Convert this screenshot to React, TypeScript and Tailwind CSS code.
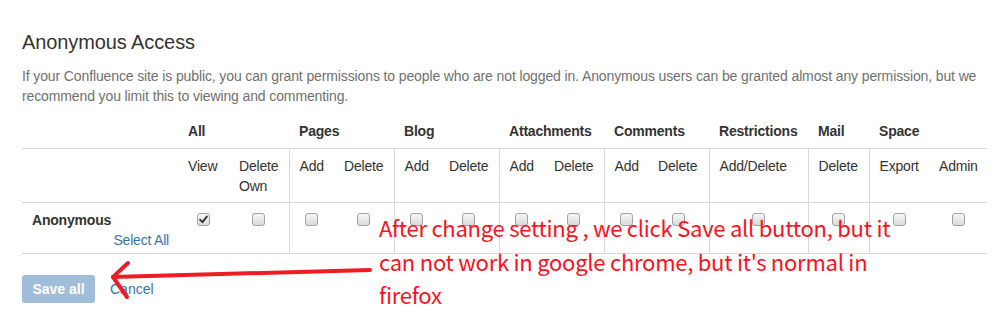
import React from "react"

const COLS = [156, 51, 60, 45, 60, 45, 60, 45, 60, 44, 61, 99, 61, 60, 58]

const GROUPS = [
    { label: "All", span: 2 },
    { label: "Pages", span: 2 },
    { label: "Blog", span: 2 },
    { label: "Attachments", span: 2 },
    { label: "Comments", span: 2 },
    { label: "Restrictions", span: 1 },
    { label: "Mail", span: 1 },
    { label: "Space", span: 2 },
]

// sub columns; sep = vertical line on the left
const SUBS = [
    { label: ["View"], sep: false, checked: true },
    { label: ["Delete", "Own"], sep: false },
    { label: ["Add"], sep: true },
    { label: ["Delete"], sep: false },
    { label: ["Add"], sep: true },
    { label: ["Delete"], sep: false },
    { label: ["Add"], sep: true },
    { label: ["Delete"], sep: false },
    { label: ["Add"], sep: true },
    { label: ["Delete"], sep: false },
    { label: ["Add/Delete"], sep: true },
    { label: ["Delete"], sep: true },
    { label: ["Export"], sep: true },
    { label: ["Admin"], sep: false },
]

const Checkbox = ({ checked }: { checked?: boolean }) => (
    <span className="inline-flex w-[13px] h-[13px] items-center justify-center rounded-[3px] border border-[#a3a3a3] bg-linear-to-b from-[#f7f7f7] to-[#dadada] align-top">
        {checked && (
            <svg width="9" height="9" viewBox="0 0 9 9">
                <path d="M1.2 4.8 L3.5 7.2 L7.8 1.6" fill="none" stroke="#333" strokeWidth="1.9" strokeLinecap="round" strokeLinejoin="round" />
            </svg>
        )}
    </span>
)

export default function App() {
    return (
        <div className="relative w-[999px] h-[321px] bg-white overflow-hidden pl-[22px] pt-[30px] font-['Liberation_Sans',Arial,sans-serif] text-[14px] text-[#333]">
            <h2 className="text-[20px] leading-[24px] tracking-[-0.1px] text-[#333]">Anonymous Access</h2>
            <p className="mt-[12px] w-[965px] leading-[20px] tracking-[-0.12px] text-[#707070]">
                If your Confluence site is public, you can grant permissions to people who are not logged in. Anonymous users can be granted almost any permission, but we recommend you limit this to viewing and commenting.
            </p>

            <table className="mt-[5px] w-[965px] table-fixed border-collapse leading-[20px] tracking-[-0.2px]">
                <colgroup>
                    {COLS.map((w, i) => <col key={i} style={{ width: w }} />)}
                </colgroup>
                <tbody>
                    <tr className="border-b border-[#d9d9d9]">
                        <th className="pt-[10px] pb-[7px]" />
                        {GROUPS.map((g) => (
                            <th key={g.label} colSpan={g.span} className="pt-[10px] pb-[7px] px-[10px] text-left font-bold whitespace-nowrap">{g.label}</th>
                        ))}
                    </tr>
                    <tr className="border-b border-[#d9d9d9]">
                        <td />
                        {SUBS.map((s, i) => (
                            <td key={i} className={`pt-[7px] pb-[6px] px-[10px] align-top whitespace-nowrap ${s.sep ? "border-l border-[#d9d9d9]" : ""}`}>
                                {s.label.map((l) => <div key={l}>{l}</div>)}
                            </td>
                        ))}
                    </tr>
                    <tr className="border-b border-[#d9d9d9]">
                        <td className="pt-[7px] pb-[3px] pl-[10px] pr-[9px] align-top">
                            <div className="font-bold">Anonymous</div>
                            <div className="text-right text-[#3b73af]">Select All</div>
                        </td>
                        {SUBS.map((s, i) => (
                            <td key={i} className={`pt-[10px] align-top text-center ${s.sep ? "border-l border-[#d9d9d9]" : ""}`}>
                                <Checkbox checked={s.checked} />
                            </td>
                        ))}
                    </tr>
                </tbody>
            </table>

            <div className="mt-[21px] flex items-center gap-[15px]">
                <button className="w-[73px] h-[28px] rounded-[3px] bg-[#a0bdda] text-white font-bold">Save all</button>
                <a className="text-[#3b73af]">Cancel</a>
            </div>

            <svg className="absolute left-0 top-0 pointer-events-none" width="999" height="321">
                <g fill="none" stroke="#ee1c24" strokeWidth="4" strokeLinecap="round" strokeLinejoin="round">
                    <path d="M370 270 L113 277" />
                    <path d="M128 263 L113 277 L127 297" />
                </g>
            </svg>

            <div className="absolute left-[379px] top-[211px] w-[530px] text-[22px] leading-[33.5px] tracking-[-0.25px] text-[#ff1020] font-['Noto_Sans_CJK_TC','Noto_Sans',sans-serif]">
                After change setting , we click Save all button, but it can not work in google chrome, but it's normal in firefox
            </div>
        </div>
    )
}
